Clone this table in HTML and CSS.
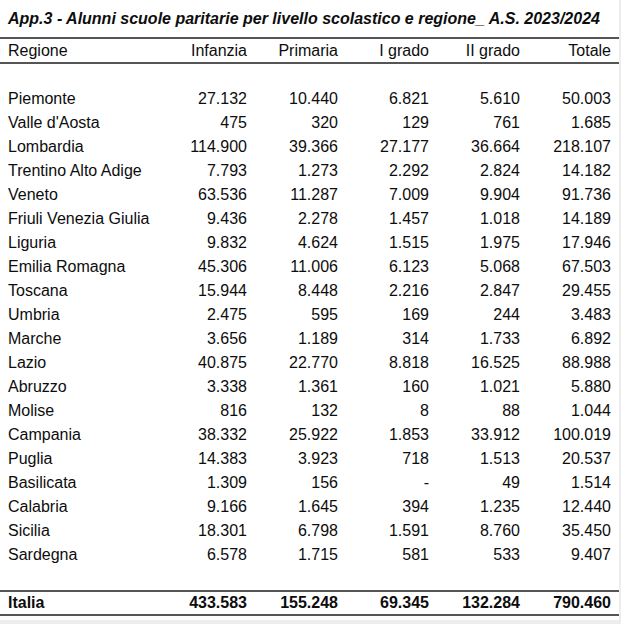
FILE: index.html
```html
<!DOCTYPE html>
<html lang="it">
<head>
<meta charset="utf-8">
<title>App.3 - Alunni scuole paritarie</title>
<link rel="stylesheet" href="styles.css">
</head>
<body>
<div class="sheet">
  <h1 class="title">App.3 - Alunni scuole paritarie per livello scolastico e regione_ A.S. 2023/2024</h1>
  <div class="table">
    <div class="row head">
      <div class="name">Regione</div><div>Infanzia</div><div>Primaria</div><div>I grado</div><div>II grado</div><div>Totale</div>
    </div>
    <div class="spacer top"></div>
    <div class="row"><div class="name">Piemonte</div><div>27.132</div><div>10.440</div><div>6.821</div><div>5.610</div><div>50.003</div></div>
    <div class="row"><div class="name">Valle d'Aosta</div><div>475</div><div>320</div><div>129</div><div>761</div><div>1.685</div></div>
    <div class="row"><div class="name">Lombardia</div><div>114.900</div><div>39.366</div><div>27.177</div><div>36.664</div><div>218.107</div></div>
    <div class="row"><div class="name">Trentino Alto Adige</div><div>7.793</div><div>1.273</div><div>2.292</div><div>2.824</div><div>14.182</div></div>
    <div class="row"><div class="name">Veneto</div><div>63.536</div><div>11.287</div><div>7.009</div><div>9.904</div><div>91.736</div></div>
    <div class="row"><div class="name">Friuli Venezia Giulia</div><div>9.436</div><div>2.278</div><div>1.457</div><div>1.018</div><div>14.189</div></div>
    <div class="row"><div class="name">Liguria</div><div>9.832</div><div>4.624</div><div>1.515</div><div>1.975</div><div>17.946</div></div>
    <div class="row"><div class="name">Emilia Romagna</div><div>45.306</div><div>11.006</div><div>6.123</div><div>5.068</div><div>67.503</div></div>
    <div class="row"><div class="name">Toscana</div><div>15.944</div><div>8.448</div><div>2.216</div><div>2.847</div><div>29.455</div></div>
    <div class="row"><div class="name">Umbria</div><div>2.475</div><div>595</div><div>169</div><div>244</div><div>3.483</div></div>
    <div class="row"><div class="name">Marche</div><div>3.656</div><div>1.189</div><div>314</div><div>1.733</div><div>6.892</div></div>
    <div class="row"><div class="name">Lazio</div><div>40.875</div><div>22.770</div><div>8.818</div><div>16.525</div><div>88.988</div></div>
    <div class="row"><div class="name">Abruzzo</div><div>3.338</div><div>1.361</div><div>160</div><div>1.021</div><div>5.880</div></div>
    <div class="row"><div class="name">Molise</div><div>816</div><div>132</div><div>8</div><div>88</div><div>1.044</div></div>
    <div class="row"><div class="name">Campania</div><div>38.332</div><div>25.922</div><div>1.853</div><div>33.912</div><div>100.019</div></div>
    <div class="row"><div class="name">Puglia</div><div>14.383</div><div>3.923</div><div>718</div><div>1.513</div><div>20.537</div></div>
    <div class="row"><div class="name">Basilicata</div><div>1.309</div><div>156</div><div>-</div><div>49</div><div>1.514</div></div>
    <div class="row"><div class="name">Calabria</div><div>9.166</div><div>1.645</div><div>394</div><div>1.235</div><div>12.440</div></div>
    <div class="row"><div class="name">Sicilia</div><div>18.301</div><div>6.798</div><div>1.591</div><div>8.760</div><div>35.450</div></div>
    <div class="row"><div class="name">Sardegna</div><div>6.578</div><div>1.715</div><div>581</div><div>533</div><div>9.407</div></div>
    <div class="spacer bottom"></div>
    <div class="row total">
      <div class="name">Italia</div><div>433.583</div><div>155.248</div><div>69.345</div><div>132.284</div><div>790.460</div>
    </div>
  </div>
</div>
</body>
</html>
```
FILE: styles.css
```css
html, body {
  margin: 0;
  padding: 0;
  background: #ededed;
}

.sheet {
  width: 619px;
  height: 620px;
  background: #ffffff;
  font-family: "Liberation Sans", Arial, sans-serif;
  color: #0d0d0d;
}

.title {
  margin: 0;
  height: 37px;
  padding-left: 8px;
  display: flex;
  align-items: center;
  font-size: 16px;
  font-weight: bold;
  font-style: italic;
  white-space: nowrap;
}

.table {
  display: flex;
  flex-direction: column;
}

.row {
  display: grid;
  grid-template-columns: 156px repeat(5, 91px);
  padding-right: 8px;
  height: 24px;
  align-items: center;
  font-size: 16px;
}

.row > div {
  text-align: right;
  white-space: nowrap;
}

.row > .name {
  text-align: left;
  padding-left: 8px;
}

.row.head {
  border-top: 2px solid #555555;
  border-bottom: 2px solid #555555;
  height: 23px;
}

.spacer.top {
  height: 23px;
}

.spacer.bottom {
  height: 23px;
}

.row.total {
  border-top: 2px solid #555555;
  border-bottom: 2px solid #555555;
  height: 22px;
  font-weight: bold;
}
```
